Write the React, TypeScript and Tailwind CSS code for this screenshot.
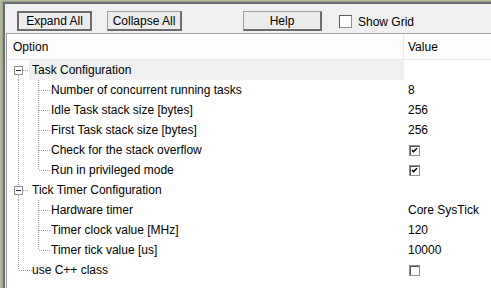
import React from "react";

type Row = {
  label: string;
  value?: string;
  check?: boolean;
  kind: "group" | "child" | "lastChild" | "leafLast";
  hot?: boolean;
};

const rows: Row[] = [
  { label: "Task Configuration", kind: "group", hot: true },
  { label: "Number of concurrent running tasks", value: "8", kind: "child" },
  { label: "Idle Task stack size [bytes]", value: "256", kind: "child" },
  { label: "First Task stack size [bytes]", value: "256", kind: "child" },
  { label: "Check for the stack overflow", check: true, kind: "child" },
  { label: "Run in privileged mode", check: true, kind: "lastChild" },
  { label: "Tick Timer Configuration", kind: "group" },
  { label: "Hardware timer", value: "Core SysTick", kind: "child" },
  { label: "Timer clock value [MHz]", value: "120", kind: "child" },
  { label: "Timer tick value [us]", value: "10000", kind: "lastChild" },
  { label: "use C++ class", check: false, kind: "leafLast" },
];

const dot = { stroke: "#a0a0a0", strokeWidth: 1, strokeDasharray: "1 1" };

// tree connector gutter for one row, drawn in row-local pixels
function Gutter({ kind, first }: { kind: Row["kind"]; first?: boolean }) {
  if (kind === "group") {
    return (
      <svg width="22" height="20" className="shrink-0">
        {!first && <line x1="11.5" y1="0" x2="11.5" y2="6" style={dot} />}
        <line x1="11.5" y1="15" x2="11.5" y2="20" style={dot} />
        <line x1="16" y1="10.5" x2="24" y2="10.5" style={dot} />
        <rect x="7.5" y="6.5" width="8" height="8" fill="#fff" stroke="#8f8f8f" />
        <line x1="9" y1="10.5" x2="14" y2="10.5" stroke="#1e395b" />
      </svg>
    );
  }
  if (kind === "leafLast") {
    return (
      <svg width="25" height="20" className="shrink-0">
        <line x1="11.5" y1="0" x2="11.5" y2="10" style={dot} />
        <line x1="12" y1="10.5" x2="25" y2="10.5" style={dot} />
      </svg>
    );
  }
  return (
    <svg width="44" height="20" className="shrink-0">
      <line x1="11.5" y1="0" x2="11.5" y2="20" style={dot} />
      <line x1="31.5" y1="0" x2="31.5" y2={kind === "lastChild" ? 10 : 20} style={dot} />
      <line x1="32" y1="10.5" x2="44" y2="10.5" style={dot} />
    </svg>
  );
}

function Check({ on }: { on: boolean }) {
  return (
    <svg width="11" height="11" className="mt-[5px]">
      <rect x="0.5" y="0.5" width="10" height="10" fill="#fff" stroke="#8e8e8e" />
      <line x1="1" y1="1.5" x2="10" y2="1.5" stroke="#5a5a5a" />
      <line x1="1.5" y1="1" x2="1.5" y2="10" stroke="#5a5a5a" />
      {on && <path d="M3 5 L4.5 6.8 L8 3.2" fill="none" stroke="#000" strokeWidth="1.4" />}
    </svg>
  );
}

export default function App() {
  return (
    <div
      className="w-[491px] h-[288px] overflow-hidden bg-[#a9be8c] pl-[2px] pt-[1px] text-[12px] text-black"
      style={{ fontFamily: '"Liberation Sans", Arial, sans-serif' }}
    >
      <div className="h-full border-l border-t border-[#a0a0a0]">
        <div className="h-full border-l-2 border-t-2 border-[#6d6d6d] bg-[#f0f0f0] flex flex-col">
          {/* toolbar */}
          <div className="h-[29px] shrink-0 flex items-start pt-[7px] pl-[12px]">
            <button className="w-[75px] h-[20px] bg-[#ececec] border-2 border-[#6d6d6d] flex items-center justify-center leading-none">
              Expand All
            </button>
            <button className="ml-[15px] w-[75px] h-[20px] bg-[#ececec] border border-[#a0a0a0] border-r-2 border-b-2 border-r-[#6d6d6d] border-b-[#6d6d6d] flex items-center justify-center leading-none">
              Collapse All
            </button>
            <button className="ml-[61px] w-[79px] h-[20px] bg-[#ececec] border border-[#a0a0a0] border-r-2 border-b-2 border-r-[#6d6d6d] border-b-[#6d6d6d] flex items-center justify-center leading-none">
              Help
            </button>
            <div className="ml-[17px] mt-[4px] flex items-center">
              <div className="w-[13px] h-[13px] bg-white border border-[#8e8e8e] border-t-[#5a5a5a] border-l-[#5a5a5a]" />
              <span className="ml-[6px] leading-none">Show Grid</span>
            </div>
          </div>

          {/* property tree */}
          <div className="flex-1 ml-[1px] bg-white border-l border-t border-[#a0a0a0] flex flex-col">
            <div className="h-[26px] shrink-0 flex border-b border-[#e3eaf4] bg-[#fdfdfd]">
              <div className="w-[397px] pl-[6px] flex items-center border-r border-[#e3eaf4]">Option</div>
              <div className="flex-1 pl-[4px] flex items-center">Value</div>
            </div>
            {rows.map((r, i) => (
              <div key={i} className="h-[20px] shrink-0 flex">
                <div className="w-[397px] flex items-stretch">
                  <Gutter kind={r.kind} first={i === 0} />
                  <div
                    className={
                      r.kind === "group"
                        ? r.hot
                          ? "flex-1 flex items-center pl-[3px] bg-[#f0f0f0]"
                          : "flex-1 flex items-center pl-[3px]"
                        : "flex-1 flex items-center"
                    }
                  >
                    {r.label}
                  </div>
                </div>
                <div className="flex-1 pl-[4px] flex items-start">
                  {r.value !== undefined && <span className="leading-[20px]">{r.value}</span>}
                  {r.check !== undefined && (
                    <span className="ml-[1px]">
                      <Check on={r.check} />
                    </span>
                  )}
                </div>
              </div>
            ))}
          </div>
        </div>
      </div>
    </div>
  );
}
